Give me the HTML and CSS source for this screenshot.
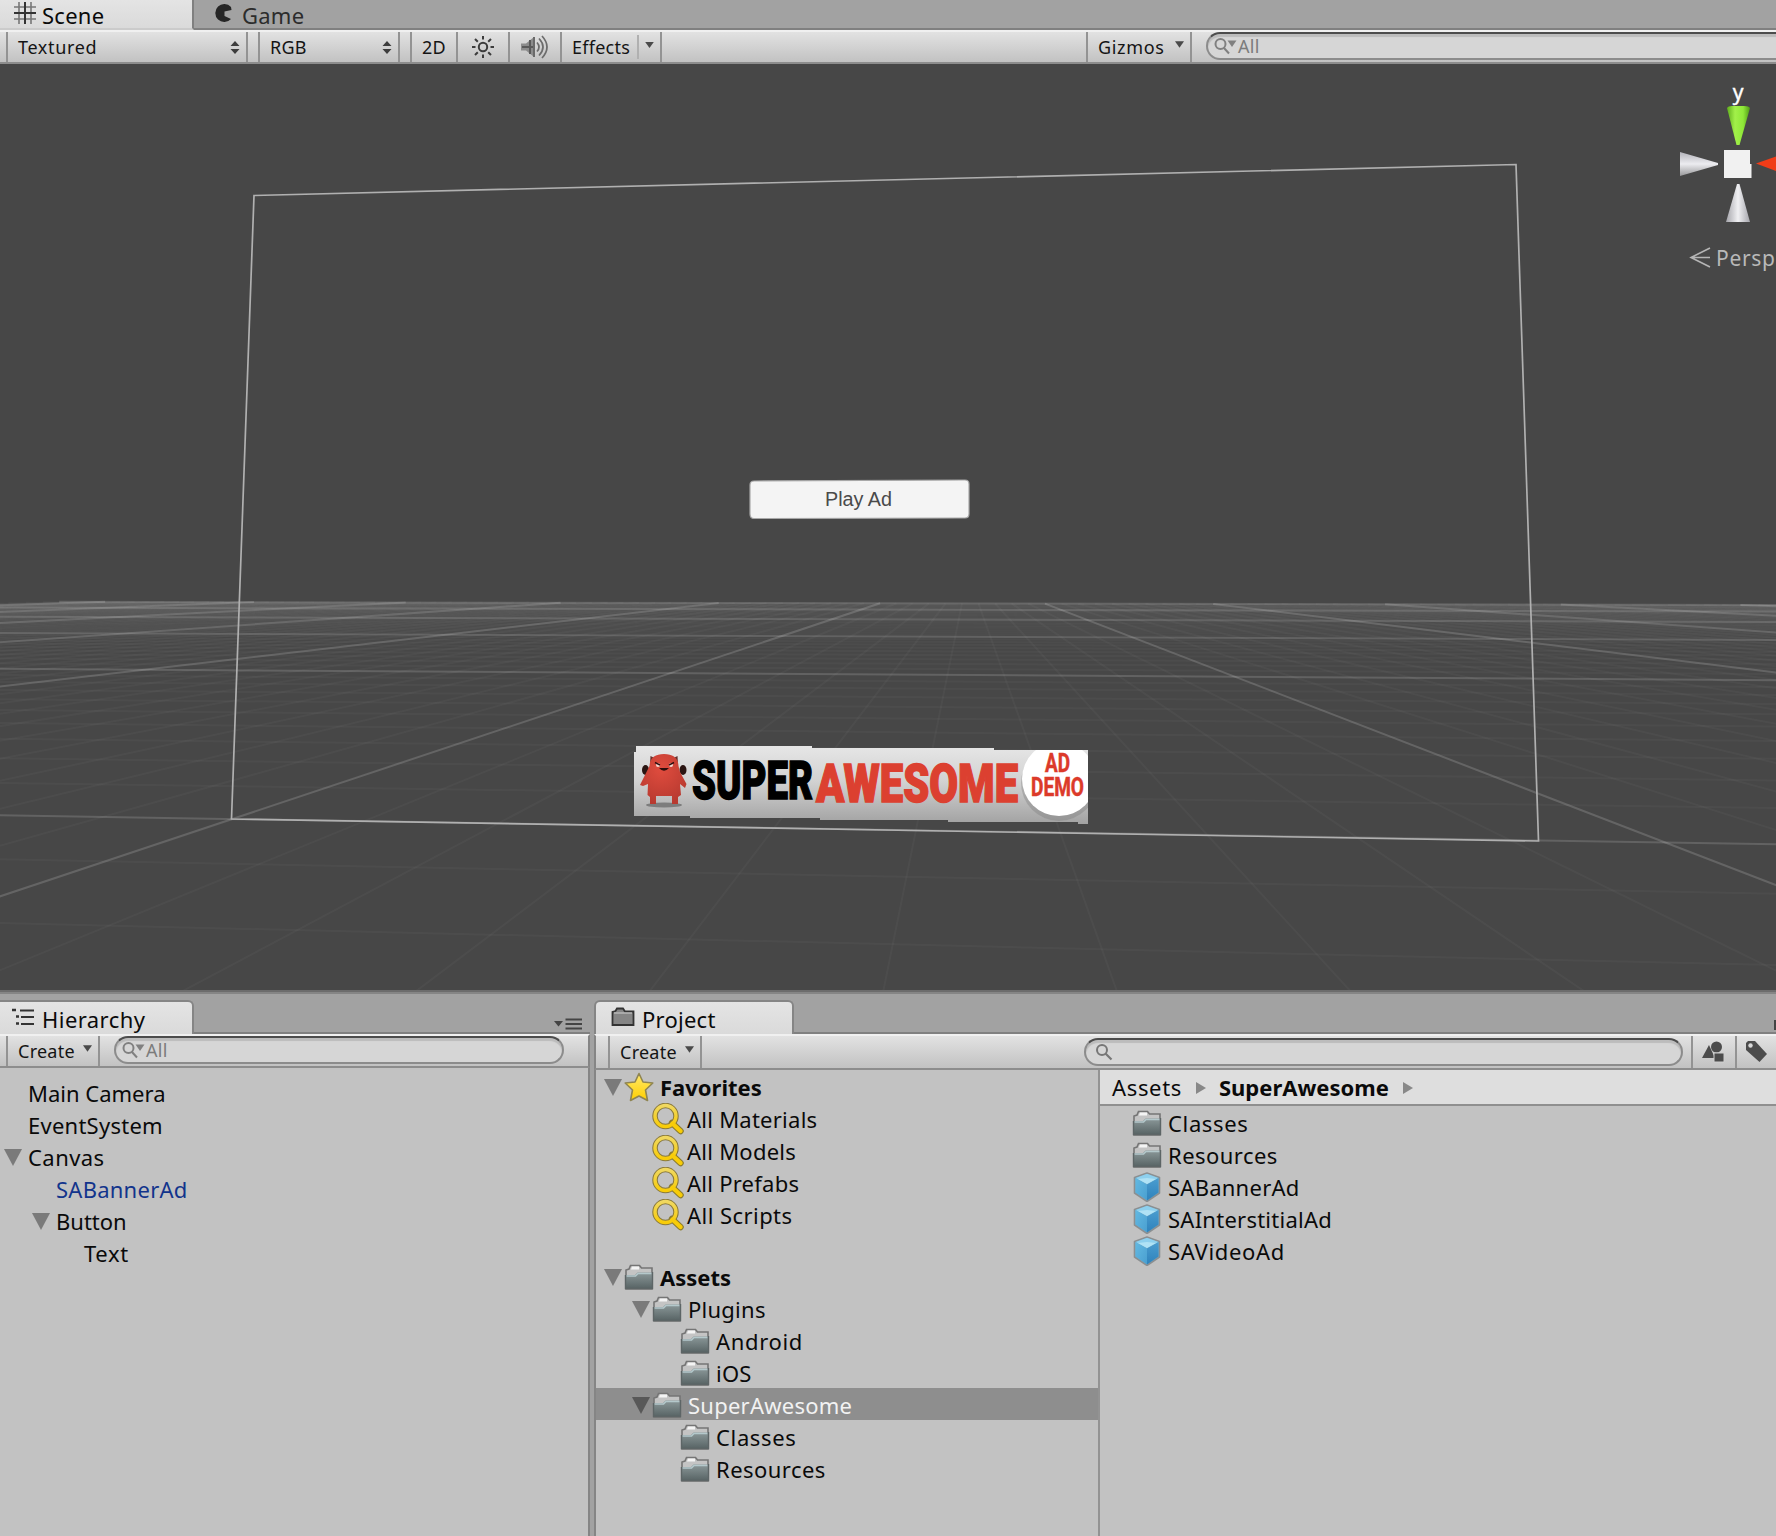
FILE: index.html
```html
<!DOCTYPE html>
<html lang="en">
<head>
<meta charset="utf-8">
<title>Unity Editor</title>
<link rel="stylesheet" href="styles.css">
</head>
<body>
<svg class="defs" width="0" height="0">
  <defs>
    <linearGradient id="folderBody" x1="0" y1="0" x2="0" y2="1"><stop offset="0" stop-color="#8b9899"/><stop offset="1" stop-color="#566263"/></linearGradient>
    <linearGradient id="gold" x1="0" y1="0" x2="0" y2="1"><stop offset="0" stop-color="#ffe96b"/><stop offset="1" stop-color="#ffcf00"/></linearGradient>
    <linearGradient id="lens" x1="0" y1="0" x2="0" y2="1"><stop offset="0" stop-color="#f0d860"/><stop offset="1" stop-color="#f8cc08"/></linearGradient>
    <linearGradient id="cubeL" x1="0" y1="0" x2="1" y2="1"><stop offset="0" stop-color="#62b9e2"/><stop offset="1" stop-color="#4a9fd0"/></linearGradient>
    <linearGradient id="cubeR" x1="0" y1="0" x2="0" y2="1"><stop offset="0" stop-color="#4a9dd0"/><stop offset="1" stop-color="#2f82bb"/></linearGradient>
    <linearGradient id="bannerBg" x1="0" y1="0" x2="0" y2="1"><stop offset="0" stop-color="#e6e6e6"/><stop offset=".45" stop-color="#d2d2d2"/><stop offset="1" stop-color="#a2a2a2"/></linearGradient>
    <radialGradient id="monster" cx=".45" cy=".3" r=".7"><stop offset="0" stop-color="#e04c3e"/><stop offset="1" stop-color="#b83a30"/></radialGradient>
    <linearGradient id="coneGreen"><stop offset="0" stop-color="#5fae1c"/><stop offset=".35" stop-color="#a2f04a"/><stop offset=".7" stop-color="#8fe838"/><stop offset="1" stop-color="#4f9a16"/></linearGradient>
    <linearGradient id="coneGrey"><stop offset="0" stop-color="#a4a4aa"/><stop offset=".5" stop-color="#f0f0f3"/><stop offset="1" stop-color="#a4a4aa"/></linearGradient>
    <linearGradient id="coneSide" x1="0" y1="0" x2="0" y2="1"><stop offset="0" stop-color="#b4b4ba"/><stop offset=".5" stop-color="#ececf0"/><stop offset="1" stop-color="#98989a"/></linearGradient>
    <symbol id="folder" viewBox="0 0 30 28">
      <path d="M2 26V7l3-1 1.500-3.500h9L17.500 5H28v21z" fill="#c4c4c4" stroke="#757575" stroke-width="1.600"/>
      <path d="M8 3.500h7v3H7z" fill="#f4f4f4"/>
      <path d="M2 12h9l2.500-2.500H28V26H2z" fill="url(#folderBody)"/>
      <path d="M2.500 13h9l2.500-2.500h13.500" fill="none" stroke="#b4c8cb" stroke-width="1.600"/>
      <path d="M1.500 12v13.500h27V9" fill="none" stroke="#5d6566" stroke-width="1.400"/>
    </symbol>
    <symbol id="cube" viewBox="0 0 30 30">
      <path d="M15 1L27.500 5.500V21L15 29.500 2.500 21V5.500z" fill="#77aac4" stroke="#8b8f91" stroke-width="1.600" stroke-linejoin="round"/>
      <path d="M15 1.800L26.500 6 15 12 3.500 6z" fill="#8ed0ee"/>
      <path d="M3.500 6L15 12.500V28.500L3.500 20.500z" fill="url(#cubeL)"/>
      <path d="M26.500 6L15 12.500V28.500l11.500-8z" fill="url(#cubeR)"/>
      <path d="M6 7l9-1 9 1-9 5z" fill="#b0e2f5"/>
    </symbol>
    <symbol id="star" viewBox="0 0 30 30">
      <path d="M15 1.500l4 8.500 9.800 1-7.300 7 2 10.500L15 24 6.500 28.500l2-10.500-7.300-7 9.800-1z" fill="url(#gold)" stroke="#8f8552" stroke-width="1.600" stroke-linejoin="round"/>
    </symbol>
    <symbol id="finder" viewBox="0 0 32 32">
      <path d="M20 20l8.500 8" stroke="#8a7a2c" stroke-width="6.500" stroke-linecap="round"/>
      <circle cx="13.500" cy="13" r="10.500" fill="none" stroke="#8a7a3c" stroke-width="5.500"/>
      <circle cx="13.500" cy="13" r="10.500" fill="none" stroke="url(#lens)" stroke-width="3.400"/>
      <path d="M20.500 20.500l8 7.500" stroke="#f8cc08" stroke-width="4.400" stroke-linecap="round"/>
    </symbol>
    <symbol id="fold" viewBox="0 0 18 17"><path d="M0 0h18L9 17z" fill="currentColor"/></symbol>
    <symbol id="updown" viewBox="0 0 10 13"><path d="M5 0l4.500 5h-9zM5 13l4.500-5h-9z" fill="#3d3d3d"/></symbol>
    <symbol id="down" viewBox="0 0 10 7"><path d="M0 0h10L5 7z" fill="#4a4a4a"/></symbol>
    <symbol id="searchMenu" viewBox="0 0 24 18">
      <circle cx="6.500" cy="7" r="5" fill="none" stroke="#808080" stroke-width="2"/>
      <path d="M10 11l5 5.500" stroke="#808080" stroke-width="2"/>
      <path d="M13.500 3.500h9L18 10z" fill="#808080"/>
    </symbol>
  </defs>
</svg>

<header class="tabs tabs-top">
  <div class="tab tab-scene active">
    <svg width="22" height="22" viewBox="0 0 22 22"><path d="M0 5h22M0 17h22M5 0v22M17 0v22" stroke="#777" stroke-width="1.600"/><path d="M0 11h22M11 0v22" stroke="#333" stroke-width="2"/></svg>
    <span class="t">Scene</span>
  </div>
  <div class="tab tab-game">
    <svg width="18" height="18" viewBox="0 0 18 18"><path d="M16 3A9 9 0 1 0 16 15L9.500 12V7.500L16.500 6z" fill="#262626"/></svg>
    <span class="t">Game</span>
  </div>
</header>

<div class="bar bar-scene">
  <div class="cell w8"></div>
  <div class="cell w240 between"><span class="t spread">Textured</span><svg width="10" height="13"><use href="#updown"/></svg></div>
  <div class="cell w12"></div>
  <div class="cell w140 between"><span class="t">RGB</span><svg width="10" height="13"><use href="#updown"/></svg></div>
  <div class="cell w12"></div>
  <div class="cell w46 center"><span class="t">2D</span></div>
  <div class="cell w52 center"><svg width="22" height="22" viewBox="0 0 22 22" fill="none" stroke="#3c3c3c" stroke-width="2"><circle cx="11" cy="11" r="4.200"/><path d="M11 0v3.500M11 18.500V22M0 11h3.500M18.500 11H22M3 3l2.800 2.800M16.200 16.200L19 19M19 3l-2.800 2.800M5.800 16.200L3 19"/></svg></div>
  <div class="cell w52 speaker"><svg width="28" height="24" viewBox="0 0 28 24"><path d="M1 8.500h5L14 2v20l-8-6.500H1z" fill="#8c8c8c"/><path d="M2 12h12M10 5v14" stroke="#5a5a5a" stroke-width="2"/><path d="M14 2v20" stroke="#6a6a6a" stroke-width="2"/><path d="M17 7.500q4 4.500 0 9M19 3.500q8 8.500 0 17M22 1q10 11 0 22" fill="none" stroke="#6c6c6c" stroke-width="1.700"/></svg></div>
  <div class="cell w100 effects"><span class="t">Effects</span><i class="split"></i><svg width="9" height="6"><use href="#down"/></svg></div>
  <div class="cell grow"></div>
  <div class="cell w104 menu"><span class="t spread">Gizmos</span><svg width="9" height="7"><use href="#down"/></svg></div>
  <div class="search search-scene"><svg width="24" height="18"><use href="#searchMenu"/></svg><span class="t">All</span></div>
</div>

<main class="scene">
  <svg class="view" width="1776" height="926" viewBox="0 64 1776 926">
    <g id="grid"></g>
    <path d="M254 195.500L1516 164.500L1538.500 841L231.500 819Z" fill="none" stroke="#b0b0b0" stroke-width="1.700"/>
    <!-- Play button -->
    <path d="M754 481L965 480Q969 480 969 484V514Q969 518 965 518L754 518.500Q750 518.500 750 514V485Q750 481 754 481Z" fill="#f4f4f4" stroke="#a8a8a8" stroke-width="1.200"/>
    <text class="play" x="825" y="506" textLength="67" lengthAdjust="spacingAndGlyphs">Play Ad</text>
    <!-- Ad banner -->
    <clipPath id="bannerClip"><path d="M636 746H812V748H994V750H1088V824H1078V822H948V820H820V818H690V816H634V752H636Z"/></clipPath>
    <g clip-path="url(#bannerClip)">
      <rect x="634" y="746" width="454" height="78" fill="url(#bannerBg)"/>
      <ellipse cx="664" cy="805" rx="18" ry="2.500" fill="#7d7d7d"/>
      <ellipse cx="645.500" cy="770" rx="3.500" ry="5" fill="#2a1512"/><ellipse cx="683" cy="770" rx="3.500" ry="5" fill="#2a1512"/>
      <path d="M650 764l.5-8 4 2zM678 764l-.5-8-4 2z" fill="#65302b"/>
      <path d="M649.500 766Q650 754 664 754T678.500 766L680 772L686.500 784 685 788 680 784 681 795 678 797 678 804H672V796H656V804H650V797L647.500 795 648 784 643 786 640 785 647.500 770Z" fill="url(#monster)"/>
      <circle cx="658" cy="765" r="2" fill="#f7dcd4"/><circle cx="671" cy="765" r="2" fill="#f7dcd4"/>
      <path d="M655 762.500l5 2.500M674 762.500l-5 2.500" stroke="#301010" stroke-width="1.400"/>
      <path d="M659 768h10q-5 5.500-10 0z" fill="#2a0d0b"/>
      <text class="logo" x="692" y="799" textLength="121" lengthAdjust="spacingAndGlyphs">SUPER</text>
      <text class="logo red" x="816" y="801.500" textLength="202" lengthAdjust="spacingAndGlyphs">AWESOME</text>
      <circle cx="1059" cy="783" r="38" fill="#777" opacity=".35"/>
      <circle cx="1059" cy="779" r="37" fill="#fff"/>
      <text class="demo" x="1045" y="772" textLength="25" lengthAdjust="spacingAndGlyphs">AD</text>
      <text class="demo" x="1031" y="796" textLength="53" lengthAdjust="spacingAndGlyphs">DEMO</text>
    </g>
    <!-- Orientation gizmo -->
    <text class="axis" x="1738" y="100" text-anchor="middle">y</text>
    <path d="M1727 108q1-2 5-2h12q5 0 6 2L1739.500 145h-3z" fill="url(#coneGreen)"/>
    <path d="M1680 152l38 11v2l-38 11z" fill="url(#coneSide)"/>
    <path d="M1737 184h2.500L1750 222h-24z" fill="url(#coneGrey)"/>
    <path d="M1776 156.500L1756 163.500 1776 171z" fill="#f03c18"/>
    <path d="M1724 150h26v14h1.500v14H1724z" fill="#f1f1f1"/>
    <path d="M1710 248l-19 9.500 19 9.500M1691 257.500h19" fill="none" stroke="#b5b5b5" stroke-width="1.600"/>
    <text class="persp" x="1716" y="266">Persp</text>
  </svg>
</main>

<div class="lower">
  <section class="panel hierarchy">
    <div class="tabs tabs-panel">
      <div class="tab tab-hier active">
        <svg width="24" height="18" viewBox="0 0 24 18"><path d="M0 2h4M4 8.500h3M4 15.500h3" stroke="#333" stroke-width="2.400"/><path d="M8 2.500h14M9 9h13M9 16h13" stroke="#333" stroke-width="2"/></svg>
        <span class="t wide">Hierarchy</span>
      </div>
      <svg class="panel-menu" width="28" height="12" viewBox="0 0 28 12"><path d="M0 3h9L4.500 8.500z" fill="#444"/><path d="M11.500 1.500H28M11.500 6H28M11.500 10.500H28" stroke="#444" stroke-width="2"/></svg>
    </div>
    <div class="bar bar-hier">
      <div class="cell w8"></div>
      <div class="cell w92 menu"><span class="t">Create</span><svg width="9" height="7"><use href="#down"/></svg></div>
      <div class="search search-hier"><svg width="24" height="18"><use href="#searchMenu"/></svg><span class="t">All</span></div>
    </div>
    <div class="tree">
      <div class="row"><span class="t tight">Main Camera</span></div>
      <div class="row"><span class="t">EventSystem</span></div>
      <div class="row"><svg class="fold" width="18" height="17"><use href="#fold"/></svg><span class="t wide">Canvas</span></div>
      <div class="row in1 prefab"><span class="t">SABannerAd</span></div>
      <div class="row in1"><svg class="fold" width="18" height="17"><use href="#fold"/></svg><span class="t tight">Button</span></div>
      <div class="row in2"><span class="t spread">Text</span></div>
    </div>
  </section>

  <section class="panel project">
    <div class="tabs tabs-panel">
      <div class="tab tab-proj active">
        <svg width="24" height="20" viewBox="0 0 24 20"><path d="M1.500 18V5l3-1 1.500-2.500h6L14 4.500h8.500V18z" fill="#858585" stroke="#333" stroke-width="1.800"/><path d="M3 6h18" stroke="#bbb" stroke-width="1.400"/></svg>
        <span class="t">Project</span>
      </div>
      <i class="menu-edge"></i>
    </div>
    <div class="bar bar-proj">
      <div class="cell w14"></div>
      <div class="cell w92 menu"><span class="t">Create</span><svg width="9" height="7"><use href="#down"/></svg></div>
      <div class="search search-proj"><svg width="18" height="18" viewBox="0 0 18 18"><circle cx="7" cy="7" r="5" fill="none" stroke="#777" stroke-width="2"/><path d="M10.500 10.500l6 6" stroke="#777" stroke-width="2.200"/></svg></div>
      <div class="cell w10"></div>
      <div class="cell w44 center"><svg width="24" height="22" viewBox="0 0 24 22" fill="#4c4c4c"><path d="M0 17L7 4l6 13z"/><circle cx="14.500" cy="6" r="5.500"/><path d="M12 12h10v9H12z" stroke="#cfcfcf" stroke-width="1"/></svg></div>
      <div class="cell tag"><svg width="24" height="24" viewBox="0 0 24 24"><path d="M1 3l2-2h7l12 13-7.500 8L1 10z" fill="#4c4c4c"/><circle cx="5.500" cy="5.500" r="2.200" fill="#d8d8d8"/></svg></div>
    </div>
    <div class="columns">
      <div class="side">
        <div class="row bold"><svg class="fold" width="18" height="17"><use href="#fold"/></svg><svg class="ico" width="30" height="30"><use href="#star"/></svg><span class="t tight">Favorites</span></div>
        <div class="row in1"><svg class="ico find" width="32" height="32"><use href="#finder"/></svg><span class="t">All Materials</span></div>
        <div class="row in1"><svg class="ico find" width="32" height="32"><use href="#finder"/></svg><span class="t">All Models</span></div>
        <div class="row in1"><svg class="ico find" width="32" height="32"><use href="#finder"/></svg><span class="t">All Prefabs</span></div>
        <div class="row in1"><svg class="ico find" width="32" height="32"><use href="#finder"/></svg><span class="t wide">All Scripts</span></div>
        <div class="row bold gap"><svg class="fold" width="18" height="17"><use href="#fold"/></svg><svg class="ico" width="30" height="28"><use href="#folder"/></svg><span class="t tight">Assets</span></div>
        <div class="row in1"><svg class="fold" width="18" height="17"><use href="#fold"/></svg><svg class="ico" width="30" height="28"><use href="#folder"/></svg><span class="t">Plugins</span></div>
        <div class="row in2"><svg class="ico" width="30" height="28"><use href="#folder"/></svg><span class="t spread">Android</span></div>
        <div class="row in2"><svg class="ico" width="30" height="28"><use href="#folder"/></svg><span class="t">iOS</span></div>
        <div class="row in1 selected"><svg class="fold" width="18" height="17"><use href="#fold"/></svg><svg class="ico" width="30" height="28"><use href="#folder"/></svg><span class="t">SuperAwesome</span></div>
        <div class="row in2"><svg class="ico" width="30" height="28"><use href="#folder"/></svg><span class="t spread">Classes</span></div>
        <div class="row in2"><svg class="ico" width="30" height="28"><use href="#folder"/></svg><span class="t wide">Resources</span></div>
      </div>
      <div class="content">
        <div class="crumbs"><span class="t spread">Assets</span><i class="arrow"></i><span class="t tight bold">SuperAwesome</span><i class="arrow"></i></div>
        <div class="files">
          <div class="row"><svg class="ico" width="30" height="28"><use href="#folder"/></svg><span class="t spread">Classes</span></div>
          <div class="row"><svg class="ico" width="30" height="28"><use href="#folder"/></svg><span class="t wide">Resources</span></div>
          <div class="row"><svg class="ico" width="30" height="30"><use href="#cube"/></svg><span class="t">SABannerAd</span></div>
          <div class="row"><svg class="ico" width="30" height="30"><use href="#cube"/></svg><span class="t">SAInterstitialAd</span></div>
          <div class="row"><svg class="ico" width="30" height="30"><use href="#cube"/></svg><span class="t spread">SAVideoAd</span></div>
        </div>
      </div>
    </div>
  </section>
</div>
<script src="grid.js"></script>
</body>
</html>
```
FILE: grid.js
```js
// Draws the ground plane: two families of lines in perspective.
(function () {
  var NS = 'http://www.w3.org/2000/svg';
  var grid = document.getElementById('grid');
  var HORIZON = 574, VANISH_X = 968, FAR = 29.3, NEAR = 420;
  var TILT = 0.000064, LEFT_EDGE = -31;

  function line(x1, y1, x2, y2, alpha) {
    var el = document.createElementNS(NS, 'line');
    el.setAttribute('x1', x1.toFixed(1));
    el.setAttribute('y1', y1.toFixed(1));
    el.setAttribute('x2', x2.toFixed(1));
    el.setAttribute('y2', y2.toFixed(1));
    el.setAttribute('stroke-opacity', alpha);
    grid.appendChild(el);
  }

  // Lines that run away from the camera
  for (var i = -60; i <= 70; i++) {
    var t = 2.597 + 0.56 * i;
    var start = FAR * (1 + TILT * 80) / (1 - TILT * FAR * t);
    line(VANISH_X + t * start, HORIZON + start, VANISH_X + t * NEAR, HORIZON + NEAR,
      i % 10 === 0 ? 0.16 : 0.03);
  }

  // Lines that run across the view
  for (var k = -2; k <= 50; k++) {
    var d = 1 / (0.00391 + 0.000604 * k);
    var slope = TILT * d;
    var left = Math.max(0, VANISH_X + LEFT_EDGE * d);
    line(left, HORIZON + d + slope * (left - 888), 1776, HORIZON + d + slope * 888,
      k % 10 === 0 ? 0.15 : 0.032);
  }
})();
```
FILE: styles.css
```css
* { box-sizing: border-box; }
body {
  margin: 0;
  width: 1776px;
  height: 1536px;
  overflow: hidden;
  display: flex;
  flex-direction: column;
  background: #a2a2a2;
  color: #0a0a0a;
  font-family: "Noto Sans", "Open Sans", sans-serif;
  font-size: 22px;
  line-height: 32px;
}
svg { display: block; flex: none; }
.defs { position: absolute; }
.t { white-space: nowrap; letter-spacing: .25px; }
.tight { letter-spacing: 0; }
.wide { letter-spacing: .45px; }
.spread { letter-spacing: .65px; }

/* Tabs */
.tabs { display: flex; flex: none; background: #a2a2a2; border-bottom: 2px solid #808080; }
.tabs-top { height: 30px; }
.tab { display: flex; align-items: center; }
.tab.active { background: linear-gradient(#e4e4e4, #dadada); }
.tab-scene { width: 194px; height: 30px; padding-left: 14px; gap: 6px; border-right: 2px solid #808080; border-bottom: 2px solid #cbcbcb; }
.tab-game { padding-left: 21px; gap: 9px; color: #2c2c2c; }
.tab-game svg { margin-top: -3px; }
.tab-scene svg { margin-top: -2px; }
.tab-scene .t { padding-top: 1px; }
.tab-game .t { padding-top: 1px; }
.tabs-panel { height: 40px; padding-top: 6px; }
.tabs-panel .tab { height: 34px; border: 2px solid #858585; border-bottom: 0; border-radius: 6px 6px 0 0; }
.tabs-panel .t { padding-top: 2px; }

/* Toolbars */
.bar { display: flex; flex: none; background: linear-gradient(#e2e2e2, #c2c2c2); border-bottom: 2px solid #8d8d8d; border-top: 2px solid #f0f0f0; font-size: 18px; color: #141414; }
.bar-scene, .bar-hier { height: 34px; }
.bar-proj { height: 36px; }
.cell { display: flex; align-items: center; border-right: 2px solid #939393; flex: none; }
.center { justify-content: center; }
.between { justify-content: space-between; padding: 0 6px 0 10px; }
.speaker { padding-left: 10px; }
.grow { flex: 1; }
.w8 { width: 8px; } .w10 { width: 10px; } .w12 { width: 12px; } .w14 { width: 14px; }
.w44 { width: 44px; } .w46 { width: 46px; } .w52 { width: 52px; }
.w92 { width: 92px; } .w100 { width: 100px; } .w104 { width: 104px; }
.w140 { width: 140px; } .w240 { width: 240px; }
.effects { padding-left: 10px; }
.split { width: 2px; height: 24px; background: #b0b0b0; margin: 0 6px 0 auto; }
.effects svg { margin: -5px 6px 0 0; }
.menu { justify-content: space-between; padding: 0 6px 0 10px; }
.menu svg { margin-top: -5px; }
.search { display: flex; align-items: center; height: 28px; background: #d6d6d6; border: 2px solid #8c8c8c; border-top-color: #4c4c4c; border-radius: 14px; box-shadow: inset 0 3px 1px #bcbcbc; color: #7c7c7c; flex: none; padding-left: 6px; }
.search-scene { width: 640px; margin-left: 14px; margin-right: -70px; }
.search-hier { width: 450px; margin-left: 14px; }
.search-proj { width: 599px; margin: 2px 0 0 auto; padding-left: 9px; }
.tag { width: 39px; padding-left: 8px; border: 0; }

/* Scene view */
.scene { flex: none; height: 930px; background: #474747; border-bottom: 2px solid #858585; box-shadow: inset 0 -2px #6c6c6c; }
#grid { stroke: #fff; stroke-width: 2; }
.play { font: 20px "Liberation Sans", sans-serif; fill: #4a4a4a; }
.logo { font: 900 54.500px Roboto, sans-serif; fill: #000; stroke: #000; stroke-width: 1.500px; }
.logo.red { fill: #dc4030; stroke: #dc4030; }
.demo { font: 700 25px Roboto, sans-serif; fill: #dc3a2a; stroke: #dc3a2a; stroke-width: .5px; }
.axis { font: 21px "Noto Sans", sans-serif; fill: #fff; stroke: #fff; stroke-width: .4px; }
.persp { font: 21px "Noto Sans", sans-serif; letter-spacing: .7px; fill: #b9b9b9; }

/* Lower panels */
.lower { flex: 1; display: flex; min-height: 0; background: #a2a2a2; }
.panel { display: flex; flex-direction: column; }
.hierarchy { width: 590px; }
.hierarchy .bar, .tree { border-right: 2px solid #858585; }
.tabs-panel .tab-hier { width: 194px; border-left: 0; border-top-left-radius: 0; padding-left: 12px; gap: 6px; }
.tab-hier svg, .tab-proj svg { margin-top: -2px; }
.panel-menu { margin: 18px 8px 0 auto; }
.tree, .side, .content { background: #c2c2c2; }
.tree { flex: 1; padding-top: 8px; }
.row { display: flex; align-items: center; height: 32px; }
.row .t { padding-top: 1px; }
.fold { color: #7a7a7a; margin-top: 3px; }
.tree .row { padding-left: 28px; }
.tree .row.in1 { padding-left: 56px; }
.tree .row.in2 { padding-left: 84px; }
.tree .fold { margin-left: -24px; margin-right: 6px; }
.prefab { color: #12348c; }

.project { flex: 1; margin-left: 4px; }
.project .bar, .columns { border-left: 2px solid #858585; }
.tab-proj { width: 200px; padding-left: 15px; gap: 7px; }
.menu-edge { width: 2px; height: 10px; margin: 20px 0 0 auto; background: #444; }
.columns { flex: 1; display: flex; }
.side { width: 504px; border-right: 2px solid #939393; }
.side .row { padding-left: 28px; }
.side .row.in1 { padding-left: 56px; }
.side .row.in2 { padding-left: 84px; }
.side .fold { margin-left: -20px; margin-right: 2px; }
.ico { margin-right: 6px; margin-top: 1px; }
.find { margin-right: 3px; }
.bold { font-weight: 700; }
.gap { margin-top: 30px; }
.selected { background: #8e8e8e; color: #f2f2f2; }
.selected .fold { color: #585858; }
.content { flex: 1; }
.crumbs { display: flex; align-items: center; height: 36px; background: #dedede; border-bottom: 2px solid #8f8f8f; padding-left: 12px; }
.arrow { width: 0; height: 0; border: 6px solid transparent; border-left: 10px solid #888; border-right: 0; margin: 1px 13px 0 14px; }
.files .row { padding-left: 32px; }
.files .ico { margin-top: 2px; }
```
